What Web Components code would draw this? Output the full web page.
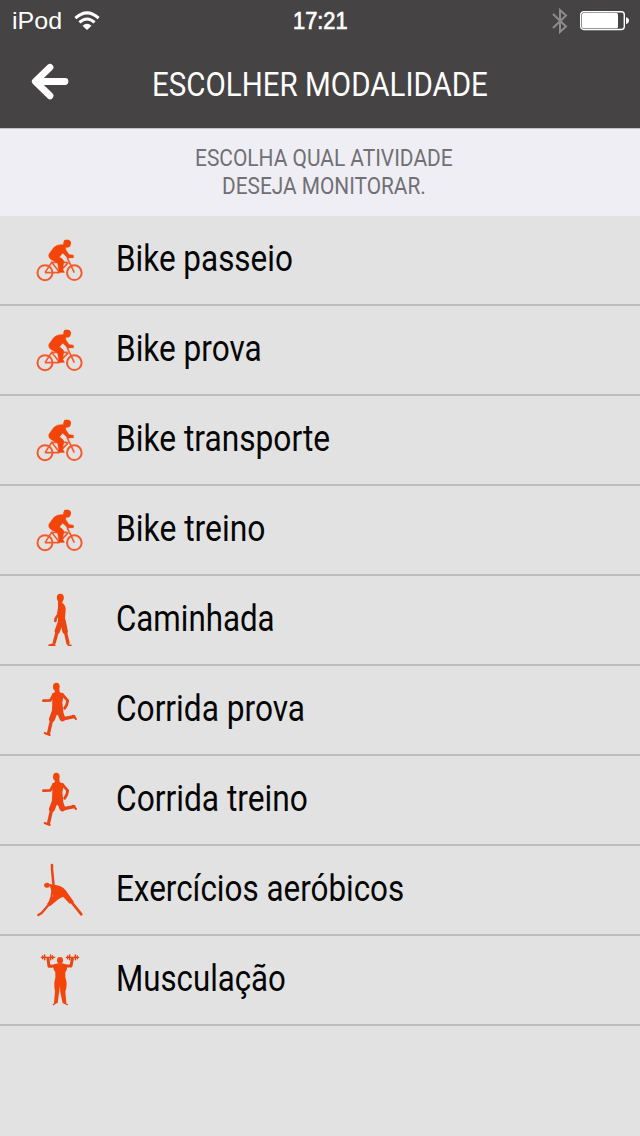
<!DOCTYPE html>
<html lang="pt-BR">
<head>
<meta charset="utf-8">
<title>Escolher modalidade</title>
<style>
html,body{margin:0;height:100%;background:#e2e2e2}
</style>
</head>
<body>
<activity-app></activity-app>
<script>
const define = (name, html, setup) => customElements.define(name, class extends HTMLElement {
  connectedCallback() {
    if (this.shadowRoot) return;
    const t = document.createElement('template');
    t.innerHTML = html;
    this.attachShadow({mode: 'open'}).append(t.content.cloneNode(true));
    if (setup) setup(this, this.shadowRoot);
  }
});

/* One line of text condensed to the width given in its attribute. */
define('fit-text', `<style>
:host{display:block;white-space:nowrap}
span{display:inline-block;transform-origin:0 50%}
</style><span><slot></slot></span>`, (el, root) => {
  const span = root.querySelector('span'), w = +el.getAttribute('width');
  el.style.width = w + 'px';
  span.style.transform = `scaleX(${w / span.offsetWidth})`;
});

define('status-bar', `<style>
:host{display:grid;grid-template-columns:1fr auto 1fr;align-items:center;height:40px;padding:0 11px 0 12px;color:#fff;font:24px/40px "Liberation Sans",Arial,sans-serif}
.left,.right{display:flex;align-items:center}
.left{gap:12px}.right{justify-content:flex-end;gap:12px}
.time{font-size:23px;-webkit-text-stroke:.7px #fff}
svg{display:block}
fit-text{line-height:42px}
</style>
<div class="left"><fit-text width="50">iPod</fit-text>
<svg width="26" height="20" viewBox="0 0 26 20" fill="none" stroke="#fff" stroke-width="3"><path d="M1.4 7.2Q13-3.4 24.6 7.2M5.4 11.4Q13 4.6 20.6 11.4"/><path d="M8.5 14.7Q13 10.8 17.5 14.7L13 19Z" fill="#fff" stroke="none"/></svg></div>
<fit-text class="time" width="55">17:21</fit-text>
<div class="right">
<svg width="16" height="28" viewBox="0 0 16 28" fill="none" stroke="#8d8c8d" stroke-width="2"><path d="M1 7L14 19.5L8 25V3L14 8.5L1 21"/></svg>
<svg width="49" height="20" viewBox="0 0 49 20"><rect x=".7" y=".7" width="43.6" height="17.8" rx="3" fill="none" stroke="#fff" stroke-width="1.4"/><rect x="2" y="2" width="36" height="15.2" rx="1.5" fill="#fff"/><path d="M46 6.3Q49 7 49 9.6T46 13Z" fill="#fff"/></svg>
</div>`);

define('nav-bar', `<style>
:host{display:grid;grid-template-columns:152px 1fr;height:88px;align-items:start;color:#fff;font:34px/88px Roboto,sans-serif}
svg{display:block;margin:22px 0 0 30px}
</style>
<svg width="40" height="40" viewBox="0 0 40 40" fill="none" stroke="#fff" stroke-width="6.8" stroke-linecap="round" stroke-linejoin="round"><path d="M20 5.3L5.3 19.5L20 33.8M6 19.5H35"/></svg>
<fit-text width="336"><slot></slot></fit-text>`);

define('page-hint', `<style>
:host{display:flex;flex-direction:column;align-items:center;box-sizing:border-box;height:88px;padding:15px 0 0 8px;background:#efeef4;color:#707075;font:24px/28px Roboto,sans-serif;border-top:1px solid #c3c2c6}
</style><fit-text width="258">ESCOLHA QUAL ATIVIDADE</fit-text><fit-text width="204">DESEJA MONITORAR.</fit-text>`);

/* Figures are drawn on a grid of three units per pixel: limbs as strokes, bodies as fills. */
const icons = {
  bike: `<g fill="none" stroke="#f55a2c" stroke-width="6"><circle cx="45" cy="128" r="22.5"/><circle cx="133" cy="128" r="22"/><path d="M45 128L65 97L88 126L115 98M65 97H112M45 128H88M133 128L112 84L122 80" stroke-width="5"/></g>
<g stroke="#f84406" stroke-width="2"><ellipse cx="111" cy="41" rx="10.5" ry="11"/><path d="M103 31H116Q123 34 122 40H110Z"/>
<path d="M106 46L98 44Q80 43 71 53L57 73Q54 83 64 89L83 98L87 122L83 127H103L98 118L101 93Q99 87 88 81L98 69L113 83H130V76L117 74L107 59Z"/></g>`,
  walk: `<ellipse cx="91" cy="38" rx="10.5" ry="12"/><path d="M84 46H98L97 54Q108 61 107 76L105 99L108 119L95 122L84 120L84 103L84 76L84 60Z"/>
<g fill="none" stroke="currentColor" stroke-linejoin="round" stroke-linecap="round"><path d="M89 63L85 88L77 101L76 108" stroke-width="8"/><path d="M92 110L82 138" stroke-width="16"/><path d="M82 138L73 172" stroke-width="10"/><path d="M73 176L57 181H75M113 174L115 181H123" stroke-width="4.5"/><path d="M99 110L105 138" stroke-width="17"/><path d="M106 140L114 174" stroke-width="10"/></g>`,
  run: `<ellipse cx="79" cy="35" rx="10" ry="12"/><path d="M73 42H88L89 51L102 58L97 82L100 110L82 121L66 107L67 77L66 56L75 51Z"/>
<g fill="none" stroke="currentColor" stroke-linejoin="round" stroke-linecap="round"><path d="M71 58L61 76L40 77" stroke-width="8"/><path d="M97 58L113 77L110 90L104 100" stroke-width="8.5"/><path d="M76 105L66 132" stroke-width="18"/><path d="M66 130L56 173" stroke-width="10"/><path d="M56 174L59 180L44 174" stroke-width="6"/><path d="M89 108L97 130" stroke-width="18"/><path d="M97 132L132 125" stroke-width="10"/><path d="M129 122L138 132" stroke-width="6"/></g>`,
  yoga: `<ellipse cx="51" cy="91" rx="8.5" ry="7.5"/><path d="M58 87L76 90Q94 91 107 106L132 141L119 146L99 125L85 133L60 154L51 147L69 122L63 104Z"/>
<g fill="none" stroke="currentColor" stroke-linejoin="round" stroke-linecap="round"><path d="M66 30V42L71 94" stroke-width="7.5"/><path d="M68 102L64 126L58 145" stroke-width="6"/><path d="M58 147L35 174L25 180" stroke-width="7"/><path d="M121 137L150 173L154 178" stroke-width="8"/></g>`,
  lift: `<ellipse cx="90" cy="46" rx="9" ry="10"/><path d="M72 58L85 55H97L110 59Q114 71 106 82L106 97Q114 119 106 140L109 175H98L91 142L90 123L87 143L83 175H72L75 139Q70 117 76 98L76 82Q66 70 72 58Z"/>
<g fill="none" stroke="currentColor" stroke-linejoin="round" stroke-linecap="round"><path d="M77 63L57 64L54 42" stroke-width="9"/><path d="M103 63L123 63L127 42" stroke-width="9"/><path d="M77 174L70 179M102 174L112 179" stroke-width="4"/><path d="M34 37H74M109 37H146" stroke-width="4"/><path d="M38 33V41M44 30V44M62 30V44M68 33V41M113 33V41M119 30V44M136 30V44M142 33V41" stroke-width="4.5"/></g>`
};

define('sport-icon', `<style>
:host{display:block;width:60px;height:72px;margin-top:9px}
:host([name=bike]){margin-top:14px}
svg{display:block;color:#ec4412;fill:#f34409}
</style><svg width="60" height="72" viewBox="0 0 180 216"></svg>`, (el, root) => {
  root.querySelector('svg').innerHTML = icons[el.getAttribute('name')];
});

define('activity-row', `<style>
:host{display:flex;box-sizing:border-box;height:90px;padding-left:30px;gap:26px;border-bottom:2px solid #bdbdbd;color:#050505;font:36px/86px Roboto,sans-serif}
</style>`, (el, root) => {
  const icon = document.createElement('sport-icon');
  icon.setAttribute('name', el.getAttribute('icon'));
  const label = document.createElement('fit-text');
  label.setAttribute('width', el.getAttribute('text-width'));
  label.append(document.createElement('slot'));
  root.append(icon, label);
});

define('activity-app', `<style>
:host{display:block;width:640px;height:1136px;overflow:hidden;background:#e2e2e2}
header{background:#454344}
</style>
<header><status-bar></status-bar><nav-bar>ESCOLHER MODALIDADE</nav-bar></header>
<page-hint></page-hint>
<main>
<activity-row icon="bike" text-width="176.5">Bike passeio</activity-row>
<activity-row icon="bike" text-width="145.5">Bike prova</activity-row>
<activity-row icon="bike" text-width="214">Bike transporte</activity-row>
<activity-row icon="bike" text-width="149.5">Bike treino</activity-row>
<activity-row icon="walk" text-width="159">Caminhada</activity-row>
<activity-row icon="run" text-width="189">Corrida prova</activity-row>
<activity-row icon="run" text-width="192">Corrida treino</activity-row>
<activity-row icon="yoga" text-width="288">Exercícios aeróbicos</activity-row>
<activity-row icon="lift" text-width="170">Musculação</activity-row>
</main>`);
</script>
</body>
</html>
